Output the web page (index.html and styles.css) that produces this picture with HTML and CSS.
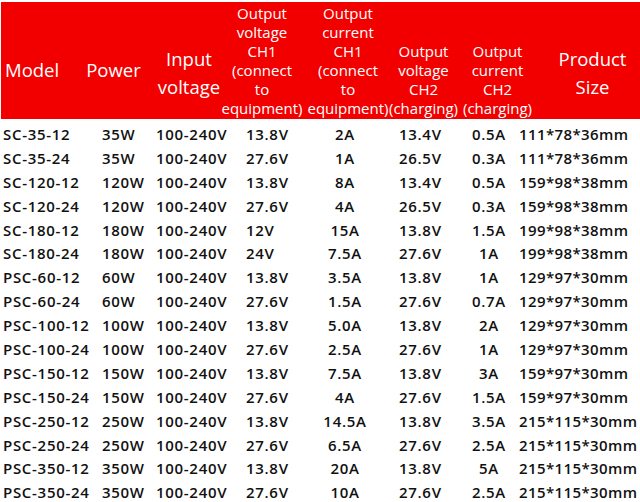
FILE: index.html
```html
<!DOCTYPE html>
<html lang="en">
<head>
<meta charset="utf-8">
<title>Charger specifications</title>
<link rel="stylesheet" href="styles.css">
</head>
<body>
<div class="sheet">
  <div class="head">
    <div class="h big h-model">Model</div>
    <div class="h big h-power">Power</div>
    <div class="h mid h-input">Input<br>voltage</div>
    <div class="h small h-v1">Output<br>voltage<br>CH1<br>(connect<br>to<br>equipment)</div>
    <div class="h small h-i1">Output<br>current<br>CH1<br>(connect<br>to<br>equipment)</div>
    <div class="h small h-v2">Output<br>voltage<br>CH2<br>(charging)</div>
    <div class="h small h-i2">Output<br>current<br>CH2<br>(charging)</div>
    <div class="h mid h-size">Product<br>Size</div>
  </div>
  <div class="rows">
    <div class="c model">SC-35-12</div><div class="c power">35W</div><div class="c input">100-240V</div><div class="c v1">13.8V</div><div class="c i1">2A</div><div class="c v2">13.4V</div><div class="c i2">0.5A</div><div class="c size">111*78*36mm</div>
    <div class="c model">SC-35-24</div><div class="c power">35W</div><div class="c input">100-240V</div><div class="c v1">27.6V</div><div class="c i1">1A</div><div class="c v2">26.5V</div><div class="c i2">0.3A</div><div class="c size">111*78*36mm</div>
    <div class="c model">SC-120-12</div><div class="c power">120W</div><div class="c input">100-240V</div><div class="c v1">13.8V</div><div class="c i1">8A</div><div class="c v2">13.4V</div><div class="c i2">0.5A</div><div class="c size">159*98*38mm</div>
    <div class="c model">SC-120-24</div><div class="c power">120W</div><div class="c input">100-240V</div><div class="c v1">27.6V</div><div class="c i1">4A</div><div class="c v2">26.5V</div><div class="c i2">0.3A</div><div class="c size">159*98*38mm</div>
    <div class="c model">SC-180-12</div><div class="c power">180W</div><div class="c input">100-240V</div><div class="c v1">12V</div><div class="c i1">15A</div><div class="c v2">13.8V</div><div class="c i2">1.5A</div><div class="c size">199*98*38mm</div>
    <div class="c model">SC-180-24</div><div class="c power">180W</div><div class="c input">100-240V</div><div class="c v1">24V</div><div class="c i1">7.5A</div><div class="c v2">27.6V</div><div class="c i2">1A</div><div class="c size">199*98*38mm</div>
    <div class="c model">PSC-60-12</div><div class="c power">60W</div><div class="c input">100-240V</div><div class="c v1">13.8V</div><div class="c i1">3.5A</div><div class="c v2">13.8V</div><div class="c i2">1A</div><div class="c size">129*97*30mm</div>
    <div class="c model">PSC-60-24</div><div class="c power">60W</div><div class="c input">100-240V</div><div class="c v1">27.6V</div><div class="c i1">1.5A</div><div class="c v2">27.6V</div><div class="c i2">0.7A</div><div class="c size">129*97*30mm</div>
    <div class="c model">PSC-100-12</div><div class="c power">100W</div><div class="c input">100-240V</div><div class="c v1">13.8V</div><div class="c i1">5.0A</div><div class="c v2">13.8V</div><div class="c i2">2A</div><div class="c size">129*97*30mm</div>
    <div class="c model">PSC-100-24</div><div class="c power">100W</div><div class="c input">100-240V</div><div class="c v1">27.6V</div><div class="c i1">2.5A</div><div class="c v2">27.6V</div><div class="c i2">1A</div><div class="c size">129*97*30mm</div>
    <div class="c model">PSC-150-12</div><div class="c power">150W</div><div class="c input">100-240V</div><div class="c v1">13.8V</div><div class="c i1">7.5A</div><div class="c v2">13.8V</div><div class="c i2">3A</div><div class="c size">159*97*30mm</div>
    <div class="c model">PSC-150-24</div><div class="c power">150W</div><div class="c input">100-240V</div><div class="c v1">27.6V</div><div class="c i1">4A</div><div class="c v2">27.6V</div><div class="c i2">1.5A</div><div class="c size">159*97*30mm</div>
    <div class="c model">PSC-250-12</div><div class="c power">250W</div><div class="c input">100-240V</div><div class="c v1">13.8V</div><div class="c i1">14.5A</div><div class="c v2">13.8V</div><div class="c i2">3.5A</div><div class="c size">215*115*30mm</div>
    <div class="c model">PSC-250-24</div><div class="c power">250W</div><div class="c input">100-240V</div><div class="c v1">27.6V</div><div class="c i1">6.5A</div><div class="c v2">27.6V</div><div class="c i2">2.5A</div><div class="c size">215*115*30mm</div>
    <div class="c model">PSC-350-12</div><div class="c power">350W</div><div class="c input">100-240V</div><div class="c v1">13.8V</div><div class="c i1">20A</div><div class="c v2">13.8V</div><div class="c i2">5A</div><div class="c size">215*115*30mm</div>
    <div class="c model">PSC-350-24</div><div class="c power">350W</div><div class="c input">100-240V</div><div class="c v1">27.6V</div><div class="c i1">10A</div><div class="c v2">27.6V</div><div class="c i2">2.5A</div><div class="c size">215*115*30mm</div>
  </div>
</div>
</body>
</html>
```
FILE: styles.css
```css
html, body {
  margin: 0;
  padding: 0;
  background: #ffffff;
}

body {
  font-family: "Open Sans", "Noto Sans", "Liberation Sans", sans-serif;
  color: #111111;
  overflow: hidden;
}

.sheet {
  width: 640px;
  height: 502px;
  padding-top: 2px;
  box-sizing: border-box;
}

/* ---------- header ---------- */
.head {
  margin-left: 1px;
  height: 117px;
  background: #f20000;
  display: grid;
  grid-template-columns: 79px 72px 74px 79px 81px 75px 84px 95px;
  align-items: end;
  color: #ffffff;
  font-weight: 400;
}

.h {
  text-align: center;
  white-space: nowrap;
}

.big {
  font-size: 18.5px;
  line-height: 28px;
  padding-bottom: 35px;
}

.mid {
  font-size: 18.5px;
  line-height: 28px;
  padding-bottom: 18px;
}

.small {
  font-size: 15px;
  line-height: 19px;
  padding-bottom: 1px;
  margin: 0 -6px;
}

.h-model {
  text-align: left;
  padding-left: 4px;
}

.h-power {
  padding-right: 5px;
}

.h-v1 {
  padding-right: 7px;
}

.h-i1 {
  padding-left: 5px;
}

.h-i2 {
  padding-right: 11px;
}

/* ---------- body rows ---------- */
.rows {
  padding-top: 4px;
  display: grid;
  grid-template-columns: 99px 54px 90px 57px 90px 70px 58px 122px;
  grid-auto-rows: 23.9px;
  font-size: 15px;
  line-height: 23.9px;
  font-weight: 600;
  letter-spacing: 0.7px;
}

.c {
  white-space: nowrap;
}

.model {
  padding-left: 3px;
}

.power {
  padding-left: 3px;
}

.input {
  padding-left: 3px;
}

.v1 {
  padding-left: 3px;
}

.i1 {
  text-align: center;
}

.v2 {
  padding-left: 9px;
}

.i2 {
  text-align: center;
}

.size {
  padding-left: 1px;
  letter-spacing: 0.4px;
}
```
